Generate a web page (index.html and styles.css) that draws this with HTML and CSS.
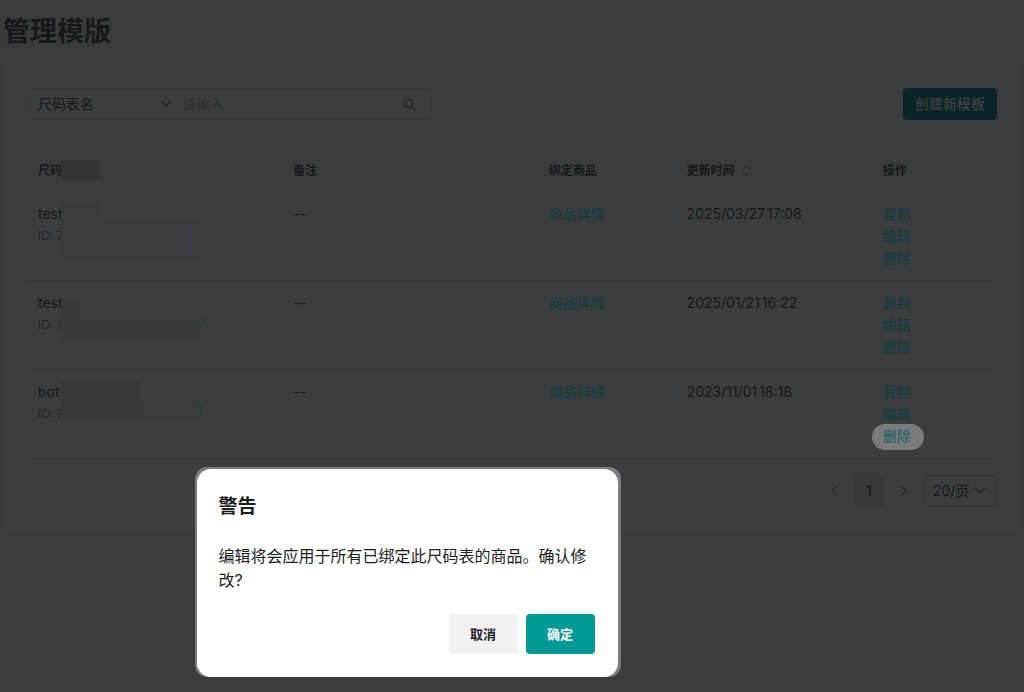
FILE: index.html
```html
<!DOCTYPE html>
<html lang="zh-CN">
<head>
<meta charset="utf-8">
<meta name="viewport" content="width=device-width, initial-scale=1">
<title>管理模版</title>
<link rel="stylesheet" href="styles.css">
</head>
<body>
<main class="page">
  <h1 class="page-title">管理模版</h1>
  <section class="card">
    <div class="toolbar">
      <form class="search">
        <span class="select-wrap search-field">
          <select class="select" aria-label="搜索字段"><option>尺码表名</option></select>
          <svg class="chevron" viewBox="0 0 12 12" aria-hidden="true"><path d="M1.500 3.500 6 8l4.500-4.500"/></svg>
        </span>
        <input class="search-input" type="text" placeholder="请输入" aria-label="搜索内容">
        <button class="search-btn" type="button" aria-label="搜索">
          <svg viewBox="0 0 14 14" aria-hidden="true"><circle cx="6" cy="6" r="4.500"/><path d="M9.400 9.400 13 13"/></svg>
        </button>
      </form>
      <button class="create-btn" type="button">创建新模板</button>
    </div>

    <table class="table">
      <colgroup><col class="c-name"><col class="c-note"><col class="c-goods"><col class="c-time"><col class="c-ops"></colgroup>
      <thead>
        <tr>
          <th><div class="cell">尺码<span class="mask mask-head"></span><span class="mask mask-head-end"></span></div></th>
          <th>备注</th>
          <th>绑定商品</th>
          <th><span class="sortable">更新时间
            <svg class="sort" viewBox="0 0 8 12" aria-hidden="true"><path d="M1 4.500 4 1.500l3 3M1 7.500l3 3 3-3"/></svg></span></th>
          <th>操作</th>
        </tr>
      </thead>
      <tbody>
        <tr>
          <td><div class="cell"><div class="name">test</div><div class="id">ID: 7</div><span class="mask mask-name"></span><span class="mask mask-id"></span><span class="mask mask-blue"></span></div></td>
          <td>--</td>
          <td><a class="link" href="#">商品详情</a></td>
          <td><div class="stamp"><span>2025/03/27</span> <span>17:08</span></div></td>
          <td><div class="ops"><a class="link" href="#">复制</a><a class="link" href="#">编辑</a><a class="link" href="#">删除</a></div></td>
        </tr>
        <tr>
          <td><div class="cell"><div class="name">test</div><div class="id">ID: 7</div><span class="mask mask-square"></span><span class="mask mask-strip"></span>
            <svg class="copy" viewBox="0 0 4 10" aria-hidden="true"><path d="M0 1h1.500Q3 1 3 3v4Q3 9 1.500 9H0"/></svg></div></td>
          <td>--</td>
          <td><a class="link" href="#">商品详情</a></td>
          <td><div class="stamp"><span>2025/01/21</span> <span>16:22</span></div></td>
          <td><div class="ops"><a class="link" href="#">复制</a><a class="link" href="#">编辑</a><a class="link" href="#">删除</a></div></td>
        </tr>
        <tr>
          <td><div class="cell"><div class="name">bot</div><div class="id">ID: 7</div><span class="mask mask-block"></span><span class="mask mask-tail"></span>
            <svg class="copy copy-edge" viewBox="0 0 4 10" aria-hidden="true"><path d="M0 1h2v8"/></svg></div></td>
          <td>--</td>
          <td><a class="link" href="#">商品详情</a></td>
          <td><div class="stamp"><span>2023/11/01</span> <span>18:18</span></div></td>
          <td><div class="ops"><a class="link" href="#">复制</a><a class="link" href="#">编辑</a><a class="link spotlight" href="#">删除</a></div></td>
        </tr>
      </tbody>
    </table>

    <nav class="pager" aria-label="分页">
      <button class="pager-arrow" type="button" aria-label="上一页"><svg viewBox="0 0 8 12" aria-hidden="true"><path d="M6 2 2 6l4 4"/></svg></button>
      <button class="pager-page" type="button" aria-current="page">1</button>
      <button class="pager-arrow" type="button" aria-label="下一页"><svg viewBox="0 0 8 12" aria-hidden="true"><path d="m2 2 4 4-4 4"/></svg></button>
      <span class="select-wrap page-size">
        <select class="select" aria-label="每页条数"><option>20/页</option></select>
        <svg class="chevron" viewBox="0 0 12 12" aria-hidden="true"><path d="M1.500 3.500 6 8l4.500-4.500"/></svg>
      </span>
    </nav>
  </section>
</main>

<div class="dialog-frame" role="dialog" aria-labelledby="dialog-title">
  <div class="dialog">
    <h2 class="dialog-title" id="dialog-title">警告</h2>
    <p class="dialog-text">编辑将会应用于所有已绑定此尺码表的商品。确认修改?</p>
    <div class="dialog-actions">
      <button class="btn" type="button">取消</button>
      <button class="btn btn-primary" type="button">确定</button>
    </div>
  </div>
</div>
</body>
</html>
```

FILE: styles.css
```css
:root {
  --bg: #3a3b3d;
  --card: #3c3d3f;
  --line: #37383a;
  --text: #17181b;
  --muted: #252628;
  --link: #173e3e;
  --teal: #009995;
}

* { box-sizing: border-box; }

body {
  margin: 0;
  background: var(--bg);
  color: var(--text);
  font: 14px/22px Inter, "Noto Sans CJK SC", sans-serif;
}

button, input, select {
  font: inherit;
  color: inherit;
  border: 0;
  padding: 0;
  margin: 0;
  background: none;
}

svg {
  display: block;
  fill: none;
  stroke: currentColor;
  stroke-linecap: round;
  stroke-linejoin: round;
}

.page { padding: 14px 3px 0 2px; }

.page-title {
  margin: 0 0 14px;
  padding-left: 1px;
  font-size: 27px;
  line-height: 36px;
  font-weight: 700;
}

.card {
  background: var(--card);
  border-radius: 8px;
  padding: 24px;
}

.toolbar {
  display: flex;
  justify-content: space-between;
  align-items: center;
  margin-bottom: 29px;
}

.search {
  display: flex;
  align-items: center;
  width: 406px;
  height: 32px;
  border: 1px solid var(--line);
  border-radius: 4px;
}

.select-wrap {
  display: flex;
  align-items: center;
  position: relative;
}

.select {
  appearance: none;
  width: 100%;
  height: 30px;
  outline: 0;
}

.chevron {
  position: absolute;
  right: 10px;
  width: 12px;
  height: 12px;
  stroke-width: 1.4;
  color: var(--muted);
  pointer-events: none;
}

.search-field { width: 155px; }
.search-field .select { padding-left: 11px; }

.search-input {
  flex: 1;
  min-width: 0;
  outline: 0;
}

.search-input::placeholder { color: #2d2e30; opacity: 1; }

.search-btn { padding: 0 15px; color: var(--muted); }
.search-btn svg { width: 13px; height: 13px; stroke-width: 1.4; }

.create-btn {
  height: 32px;
  padding: 0 12px;
  border-radius: 4px;
  background: #0b2527;
  color: #3a4244;
  font-weight: 500;
}

.table {
  width: 100%;
  table-layout: fixed;
  border-collapse: separate;
  border-spacing: 0;
}

.c-name, .c-note { width: 26.3%; }
.c-goods { width: 14.2%; }
.c-time { width: 20.2%; }
.c-ops { width: 13%; }

.table th {
  height: 43px;
  padding: 1px 12px 0;
  text-align: left;
  font-size: 12px;
  font-weight: 700;
  background: #3b3c3e;
}

.table td {
  padding: 11px 12px;
  vertical-align: top;
  border-bottom: 1px solid var(--line);
}

.sortable {
  display: inline-flex;
  align-items: center;
  gap: 7px;
}

.sort { width: 8px; height: 12px; color: var(--muted); }

.stamp { display: flex; gap: 2px; }

.cell { position: relative; }
.id { font-size: 12px; color: var(--muted); }

.link { color: var(--link); text-decoration: none; font-weight: 500; }

.ops {
  display: flex;
  flex-direction: column;
  align-items: flex-start;
}

.spotlight {
  position: relative;
  z-index: 0;
  color: #2b6464;
}

.spotlight::before {
  content: "";
  position: absolute;
  z-index: -1;
  inset: -1px -13px -3px -11px;
  border-radius: 13px;
  background: #7a7b7f;
}

/* Redaction blocks over the private names and ids */
.mask { position: absolute; left: 23px; }
.mask-head { top: 0; width: 39px; height: 20px; background: #333436; }
.mask-head-end { top: 0; left: 64px; width: 20px; height: 21px; background: #3a3b3d; }
.mask-name { top: -1px; width: 39px; height: 40px; background: #3a3b3d; }
.mask-id { top: 17px; width: 116px; height: 39px; background: #3a3b3d; }
.mask-blue { top: 17px; left: 139px; width: 22px; height: 39px; background: #383b40; }
.mask-square { top: 8px; width: 20px; height: 20px; background: #383b3e; }
.mask-strip { top: 28px; width: 139px; height: 21px; background: #393a3c; }
.mask-block { top: -1px; width: 79px; height: 40px; background: #38393b; }
.mask-tail { top: 19px; left: 102px; width: 60px; height: 20px; background: #3a3b3d; }

.copy {
  position: absolute;
  top: 24px;
  left: 162px;
  width: 4px;
  height: 10px;
  color: var(--link);
}

.copy-edge { left: 161px; }

.pager {
  display: flex;
  justify-content: flex-end;
  align-items: center;
  margin-top: 16px;
}

.pager-arrow {
  display: grid;
  place-items: center;
  width: 40px;
  height: 32px;
  color: #292a2c;
}

.pager-arrow svg { width: 8px; height: 12px; stroke-width: 1.2; }

.pager-page {
  width: 30px;
  height: 32px;
  border-radius: 4px;
  background: #38393b;
  font-weight: 500;
}

.page-size {
  width: 73px;
  border: 1px solid #343537;
  border-radius: 4px;
}

.page-size .select { padding-left: 8px; }

.dialog-frame {
  position: fixed;
  left: 19%;
  bottom: 15px;
  width: 426px;
  padding: 2px 3px 0 2px;
  border-radius: 12px;
  background: #7b7c7e;
}

.dialog {
  padding: 24px 23px 23px 22px;
  border-radius: 14px;
  background: #fff;
  color: #1c1d1f;
}

.dialog-title {
  margin: 0 0 23px;
  font-size: 19px;
  line-height: 28px;
  font-weight: 700;
}

.dialog-text {
  margin: 0 0 22px;
  font-size: 16px;
  line-height: 24px;
}

.dialog-actions {
  display: flex;
  justify-content: flex-end;
  gap: 8px;
}

.btn {
  min-width: 69px;
  height: 40px;
  border-radius: 4px;
  background: #f1f1f2;
  font-size: 13px;
  font-weight: 700;
}

.btn-primary { background: var(--teal); color: #fff; }
```
